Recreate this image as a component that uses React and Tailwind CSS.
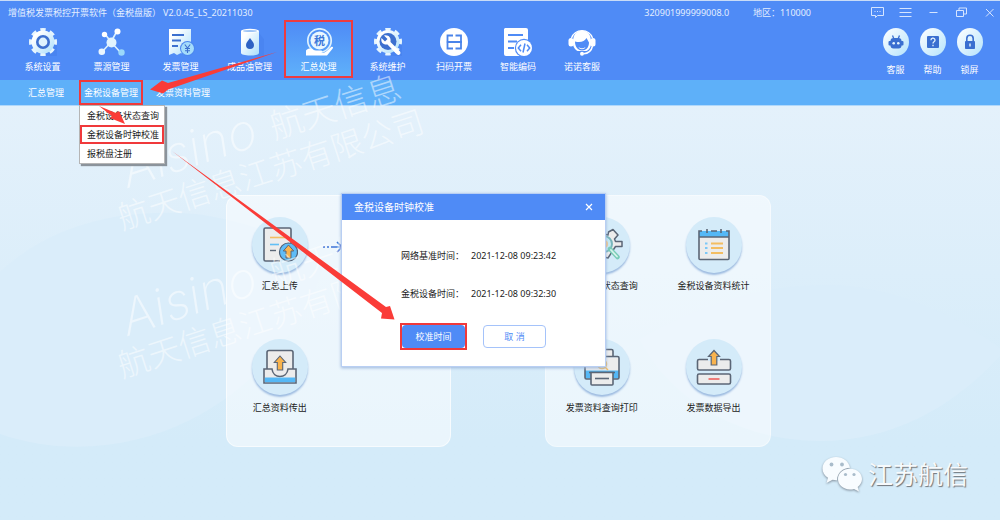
import { useState } from 'react';

const navItems = [
  { id: 'settings', label: '系统设置', icon: GearIcon },
  { id: 'source', label: '票源管理', icon: NodesIcon },
  { id: 'invoice', label: '发票管理', icon: InvoiceIcon },
  { id: 'oil', label: '成品油管理', icon: OilIcon },
  { id: 'summary', label: '汇总处理', icon: TaxIcon },
  { id: 'maintain', label: '系统维护', icon: WrenchIcon },
  { id: 'scan', label: '扫码开票', icon: ScanIcon, narrow: true },
  { id: 'code', label: '智能编码', icon: CodeIcon, narrow: true },
  { id: 'nuonuo', label: '诺诺客服', icon: HeadsetIcon, narrow: true },
];

const helpItems = [
  { label: '客服', icon: RobotIcon },
  { label: '帮助', icon: QuestionIcon },
  { label: '锁屏', icon: LockIcon },
];

const menuItems = ['金税设备状态查询', '金税设备时钟校准', '报税盘注册'];

/* ---------- Toolbar icons ---------- */

function GearIcon() {
  return (
    <svg className="w-7 h-7" viewBox="0 0 28 28">
      <path d="M22 8l6 8v12H16l-8-6z" fill="#3f78e4" opacity="0.35" />
      <circle cx="14" cy="14" r="12" fill="none" stroke="#e6f5fe" strokeWidth="4" pathLength="16" strokeDasharray="1.1 0.9" strokeDashoffset="0.55" />
      <circle cx="14" cy="14" r="11.500" fill="url(#ice)" />
      <circle cx="14" cy="14" r="7" fill="#3d70cf" />
      <circle cx="14" cy="14" r="4.400" fill="#dff3fe" />
    </svg>
  );
}

function NodesIcon() {
  return (
    <svg className="w-7 h-7" viewBox="0 0 28 28">
      <path d="M19 3L13 14M7 6l6 8M4 24l9-10M23 25L13 14" stroke="#dcf1fe" strokeWidth="1.6" />
      <circle cx="13.500" cy="14.500" r="5" fill="#e2f4fe" />
      <circle cx="19.500" cy="3.500" r="3" fill="#fff" />
      <circle cx="6.500" cy="6.500" r="2.700" fill="#fff" />
      <circle cx="3.800" cy="23.800" r="3.300" fill="#eaf6ff" />
      <circle cx="23.500" cy="24.500" r="3.200" fill="#9bd8fa" />
    </svg>
  );
}

function InvoiceIcon() {
  return (
    <svg className="w-7 h-7" viewBox="0 0 28 28">
      <path d="M2 1h22v26l-3-2-3 2-4-2-4 2-3-2-5 2z" fill="url(#ice)" />
      <path d="M5 7h12M5 12.500h9M5 18h6" stroke="#3d70cf" strokeWidth="1.800" />
      <circle cx="20.500" cy="20.500" r="7.500" fill="#4b86ee" />
      <circle cx="20.500" cy="20.500" r="6.500" fill="#a5dcfb" />
      <path d="M17.800 16.500l2.700 3.500 2.700-3.500M20.500 20v5M18 20.500h5M18 22.700h5" fill="none" stroke="#3d70cf" strokeWidth="1.100" />
    </svg>
  );
}

function OilIcon() {
  return (
    <svg className="w-7 h-7" viewBox="0 0 28 28">
      <path d="M23 5l8 10v13H15z" fill="#3f78e4" opacity="0.3" />
      <path d="M5 3v22c0 1.500 4 2.500 9 2.500s9-1 9-2.500V3z" fill="url(#ice)" />
      <ellipse cx="14" cy="2.800" rx="9" ry="2" fill="#fff" />
      <ellipse cx="14" cy="3" rx="7" ry="1.100" fill="#9cc3f5" />
      <path d="M14 10c2 3 4 4.700 4 7a4 4 0 0 1-8 0c0-2.300 2-4 4-7z" fill="#2d62c4" />
    </svg>
  );
}

function TaxIcon() {
  return (
    <svg className="w-7 h-7" viewBox="0 0 28 28">
      <circle cx="14.500" cy="12.500" r="11.700" fill="none" stroke="#dff2fe" strokeWidth="1.700" />
      <circle cx="14.500" cy="12.500" r="9" fill="#eaf7ff" />
      <text x="14.500" y="16.500" fontSize="11" fontWeight="700" textAnchor="middle" fill="#3d78da">税</text>
      <path d="M1 22.500c3-3 6-2 8 0h7c1.500 0 1.500 2 0 2.300h3c3-1 5-4.500 7.500-6 1.800-.6 1.800 1 1 2L22 27.500H1z" fill="#fff" />
    </svg>
  );
}

function WrenchIcon() {
  return (
    <svg className="w-7 h-7" viewBox="0 0 28 28">
      <path d="M22 8l6 8v12H16l-8-6z" fill="#3f78e4" opacity="0.35" />
      <circle cx="14" cy="13.500" r="12" fill="none" stroke="#e6f5fe" strokeWidth="4" pathLength="16" strokeDasharray="1.1 0.9" strokeDashoffset="0.55" />
      <circle cx="14" cy="13.500" r="11.500" fill="url(#ice)" />
      <circle cx="14" cy="13.500" r="8.500" fill="#3d70cf" />
      <path d="M10 7.500l3.500 3.500-2.500 2.500L7.500 10c-1 4 1.500 7 6 6.500L23 26.500c2 1.500 4.500-.8 3-3L16.500 14c.8-4.500-2-7.500-6.500-6.500z" fill="#fff" />
    </svg>
  );
}

function ScanIcon() {
  return (
    <svg className="w-7 h-7" viewBox="0 0 28 28">
      <circle cx="14" cy="14" r="14" fill="#fff" />
      <path d="M13 7.500H7.500v13H13M15.500 7.500H21v13h-5.500M6.500 14h15.500" fill="none" stroke="#4a84ea" strokeWidth="1.800" />
    </svg>
  );
}

function CodeIcon() {
  return (
    <svg className="w-7 h-7 overflow-visible" viewBox="0 0 28 28">
      <path d="M1 0h21a2 2 0 0 1 2 2v25a1 1 0 0 1-1 1H2a2 2 0 0 1-2-2V1z" fill="#fff" />
      <path d="M4 7h15M4 13.500h9M4 20h6" stroke="#4f8bf6" strokeWidth="1.800" />
      <circle cx="20" cy="20" r="9.200" fill="#4f8bf6" />
      <circle cx="20" cy="20" r="8" fill="#fff" />
      <path d="M17 16.800L14.300 20l2.700 3.200M23 16.800l2.700 3.200-2.700 3.200M21 15.500l-2 9" fill="none" stroke="#4f8bf6" strokeWidth="1.500" />
    </svg>
  );
}

function HeadsetIcon() {
  return (
    <svg className="w-7 h-7" viewBox="0 0 28 28">
      <path d="M3.500 10a10.800 9.500 0 0 1 21 0" fill="none" stroke="#fff" strokeWidth="1.300" />
      <path d="M5 12a9 9.500 0 0 1 18 0v5c-.5 2-2 5-4.500 6h-9c-2-1-4-3.500-4.500-6z" fill="#fff" />
      <rect x="0.500" y="10" width="5" height="8.500" rx="2.500" fill="#fff" />
      <rect x="22.500" y="10" width="5" height="8.500" rx="2.500" fill="#fff" />
      <path d="M7 13.500c5.500 1.500 9.500 0 11.500-3.500l2.500 4.500c0 5-3 8-7 8s-7-3.500-7-9z" fill="#4f8bf6" />
      <path d="M10.500 19c2 1.800 5 1.800 7 0-1 3-6 3-7 0z" fill="#fff" />
      <path d="M24.500 18c-1 4.500-4.500 7.500-9 7.800" fill="none" stroke="#fff" strokeWidth="1.500" />
      <circle cx="14" cy="25.800" r="2" fill="#fff" />
    </svg>
  );
}

function RobotIcon() {
  return (
    <svg className="w-4 h-4" viewBox="0 0 16 16" fill="#3a6fd0">
      <path d="M4.500 1.500l1.700 4M11.500 1.500l-1.700 4" stroke="#3a6fd0" strokeWidth="1.300" />
      <rect x="2.500" y="4" width="11" height="10.500" rx="3" />
      <rect x="0.500" y="7" width="15" height="4.500" rx="1" />
      <circle cx="5.700" cy="9.200" r="1.300" fill="#e5f5ff" />
      <circle cx="10.300" cy="9.200" r="1.300" fill="#e5f5ff" />
    </svg>
  );
}

function QuestionIcon() {
  return (
    <svg className="w-4 h-4" viewBox="0 0 16 16">
      <rect x="2" y="2" width="12" height="12" rx="1" fill="#3a6fd0" />
      <path d="M6 6.300a2 2 0 1 1 3 1.500c-.8.5-1 .8-1 1.700M8 10.800v1.400" fill="none" stroke="#e5f5ff" strokeWidth="1.300" />
    </svg>
  );
}

function LockIcon() {
  return (
    <svg className="w-4 h-4" viewBox="0 0 16 16">
      <path d="M4.800 8V4.500a3.200 3.200 0 0 1 6.400 0V8" fill="none" stroke="#3a6fd0" strokeWidth="1.600" />
      <rect x="3" y="7" width="10" height="8" rx="0.800" fill="#3a6fd0" />
      <path d="M8 9.500v3" stroke="#e5f5ff" strokeWidth="1.400" />
    </svg>
  );
}

/* ---------- Window buttons ---------- */

const windowButtons = [
  { label: '消息', path: 'M0.500 1.500h12v8h-6l-2 2v-2h-4zM3.500 5.500h1M6 5.500h1M8.500 5.500h1' },
  { label: '菜单', path: 'M0.500 2.500h12M0.500 6.500h12M0.500 10.500h12' },
  { label: '最小化', path: 'M2.500 6.500h8' },
  { label: '还原', path: 'M1.500 4.500h7v6h-7zM4 4.500v-2.500h7.500v6h-3' },
  { label: '关闭', path: 'M3 3l7.500 7.500M10.500 3L3 10.500' },
];

/* ---------- Function icons in the panels ---------- */

function UploadDocIcon() {
  return (
    <svg className="w-9 h-9" viewBox="0 0 36 36">
      <path d="M18 34H3.500a1.500 1.500 0 0 1-1.500-1.500v-30A1.500 1.500 0 0 1 3.500 1h24A1.500 1.500 0 0 1 29 2.500V16" fill="#ececec" stroke="#5b6676" strokeWidth="1.600" />
      <path d="M8 10.500h15" stroke="#f3bd62" strokeWidth="1.600" />
      <path d="M8 17.500h9" stroke="#62bff5" strokeWidth="1.600" />
      <path d="M8 23.500h6" stroke="#5b6676" strokeWidth="1.400" />
      <circle cx="26.500" cy="25" r="9" fill="#5ebcf7" stroke="#4f6278" strokeWidth="1.200" />
      <path d="M26.500 18l5.200 6H29v7h-5v-7h-2.700z" fill="#f8b34e" stroke="#5b6676" strokeWidth="1" />
    </svg>
  );
}

function OutboxIcon() {
  return (
    <svg className="w-9 h-9" viewBox="0 0 36 36">
      <path d="M5 20V3.500A2 2 0 0 1 7 1.500h22a2 2 0 0 1 2 2V20l-6 8H11z" fill="#ececec" stroke="#5b6676" strokeWidth="1.600" />
      <path d="M2 20h8c1 10 15 10 16 0h8v14H2z" fill="#ececec" stroke="#5b6676" strokeWidth="1.600" />
      <path d="M2.800 28.500h30.400v4.700H2.800z" fill="#55b8f6" />
      <path d="M18 7l5.700 6.500h-3v7.500h-5.400v-7.500h-3z" fill="#f8b34e" stroke="#5b6676" strokeWidth="1.100" />
    </svg>
  );
}

function GearSearchIcon() {
  return (
    <svg className="w-9 h-9 overflow-visible" viewBox="0 0 36 36">
      <path
        d="M13 7v-6h7v6l4 1 .5-3L29 2.500 34 8l-3.500 4 1 2.500H38v5h-6.500L24 31l-4-1v5h-7v-5l-4-2-5 3-4-5 4-4V14L1 9l5-4 4 3z"
        fill="#ececec"
        stroke="#5b6676"
        strokeWidth="1.500"
        strokeLinejoin="round"
      />
      <circle cx="20" cy="17" r="8" fill="#c5e9f2" stroke="#79b5bb" strokeWidth="2" />
      <circle cx="20" cy="17" r="4" fill="#f6c587" />
      <path d="M26 22l7.500 8" stroke="#79ccb8" strokeWidth="4.500" strokeLinecap="round" />
      <path d="M27 23l6 6.500" stroke="#d8f3ea" strokeWidth="1.800" strokeLinecap="round" />
    </svg>
  );
}

function CalendarIcon() {
  return (
    <svg className="w-9 h-9" viewBox="0 0 36 36">
      <path d="M3 4h30v28.500H3z" fill="#ececec" />
      <path d="M3 4h30v6H3z" fill="#55b8f6" />
      <path d="M3 10h30M6 4H3v27.500a1 1 0 0 0 1 1h28a1 1 0 0 0 1-1V4h-3M15 4h6" fill="none" stroke="#5b6676" strokeWidth="1.600" />
      <path d="M11 2v4M25 2v4" stroke="#5b6676" strokeWidth="1.600" />
      <path d="M9 16.500h2.500M9 21h2.500M9 26h2.500" stroke="#7cc8f7" strokeWidth="1.800" />
      <path d="M15 16.500h12M15 21h12M15 26h12" stroke="#f3bd62" strokeWidth="1.800" />
    </svg>
  );
}

function PrinterIcon() {
  return (
    <svg className="w-9 h-9 overflow-visible" viewBox="0 0 36 36">
      <path d="M7 8V2a1.500 1.500 0 0 1 1.500-1.500h19A1.500 1.500 0 0 1 29 2v6" fill="#ececec" stroke="#5b6676" strokeWidth="1.600" />
      <path d="M1 8.500h34v21H1z" fill="#ececec" />
      <path d="M1 21.500h34v8H1z" fill="#55b8f6" />
      <rect x="1" y="7.500" width="34" height="22.500" rx="1.500" fill="none" stroke="#5b6676" strokeWidth="1.600" />
      <circle cx="18" cy="15" r="4.500" fill="none" stroke="#f3bd62" strokeWidth="1.500" />
      <path d="M21 18l3 3" stroke="#f3bd62" strokeWidth="1.500" />
      <path d="M5 23.500h26" stroke="#5b6676" strokeWidth="1.500" />
      <path d="M7 23.500h22V35a1 1 0 0 1-1 1H8a1 1 0 0 1-1-1z" fill="#ececec" stroke="#5b6676" strokeWidth="1.600" />
      <path d="M11 29.500h14" stroke="#5b6676" strokeWidth="1.600" />
    </svg>
  );
}

function ExportIcon() {
  return (
    <svg className="w-9 h-9" viewBox="0 0 36 36">
      <rect x="1.500" y="10.500" width="33" height="10.500" rx="1.500" fill="#ececec" stroke="#5b6676" strokeWidth="1.600" />
      <rect x="1.500" y="25" width="33" height="10" rx="1.500" fill="#ececec" stroke="#5b6676" strokeWidth="1.600" />
      <path d="M12 8h12v4H12z" fill="#d5ebf9" />
      <path d="M12.500 30h11" stroke="#ee6a66" strokeWidth="1.700" />
      <path d="M18 1.500l5.500 6h-2.700V16h-5.600V7.500h-2.700z" fill="#f8b34e" stroke="#5b6676" strokeWidth="1.200" />
    </svg>
  );
}

function FunctionItem({ label, icon: Icon }) {
  return (
    <button className="flex flex-col items-center">
      <span className="w-14 h-14 rounded-full bg-[#d4ebf9] shadow-[0_2px_2px_#9dbbe0] flex items-center justify-center">
        <Icon />
      </span>
      <span className="mt-[7px] leading-3 whitespace-nowrap text-[#222]">{label}</span>
    </button>
  );
}

/* ---------- Background ---------- */

function Backdrop() {
  return (
    <svg className="absolute inset-0 w-full h-full pointer-events-none" viewBox="0 0 1000 520" preserveAspectRatio="xMidYMid slice" aria-hidden="true">
      <defs>
        <linearGradient id="ice" x1="0" y1="0" x2="1" y2="1">
          <stop offset="0.2" stopColor="#ffffff" />
          <stop offset="1" stopColor="#a9defb" />
        </linearGradient>
      </defs>
      <path d="M0 272C50 225 120 208 195 214C260 222 315 250 322 270C310 310 270 380 190 420C130 450 60 455 0 434z" fill="#daedfa" />
      <path d="M590 370C680 310 750 285 825 285C895 285 955 315 1000 348V356C950 410 890 441 820 441C740 441 670 400 640 340z" fill="#daedfa" />
    </svg>
  );
}

function Watermark() {
  return (
    <svg className="absolute inset-0 w-full h-full pointer-events-none" viewBox="0 0 1000 520" preserveAspectRatio="xMinYMin slice" aria-hidden="true">
      {[0, 148].map((y) => (
        <g key={y} fill="#fff" fillOpacity="0.5" fontSize="32" fontWeight="200">
          <g transform={`translate(128 ${188 + y}) rotate(-18)`}>
            <text className="font-[Inter]" fontSize="50" fontStyle="italic">Aisino</text>
            <text x="154" y="-1" fontSize="34">航天信息</text>
          </g>
          <text transform={`translate(122 ${230 + y}) rotate(-18)`}>航天信息江苏有限公司</text>
        </g>
      ))}
    </svg>
  );
}

/* ---------- Red guide arrows ---------- */

function GuideArrows() {
  return (
    <svg className="absolute inset-0 w-full h-full pointer-events-none z-30" viewBox="0 0 1000 520" preserveAspectRatio="xMinYMin slice" fill="#fa3c38" aria-hidden="true">
      <path d="M277 52L168 83L162 80.500L150 89.500L163 93.500L168 89.500z" />
      <path d="M99 106L116 113L119 111L125 124L110 118L112 116z" />
      <path d="M172 151L386 307L390 306L394.500 319.500L381 318.500L382 313z" />
    </svg>
  );
}

function CalibrateDialog({ onClose }) {
  return (
    <section role="dialog" aria-label="金税设备时钟校准" className="absolute left-[341px] top-[193px] w-[265px] z-20 bg-white border border-[#b9cff3] shadow-[0_1px_3px_#9ab5dc]">
      <header className="h-[26px] pl-3 pr-[11px] flex items-center bg-[#4f8bf6] text-white">
        <h2 className="text-[10px]">金税设备时钟校准</h2>
        <button onClick={onClose} aria-label="关闭" className="ml-auto">
          <svg className="w-2.5 h-2.5" viewBox="0 0 10 10" stroke="#fff" strokeWidth="1.200">
            <path d="M2 2l6 6M8 2l-6 6" />
          </svg>
        </button>
      </header>
      <dl className="pt-7 pl-[59px] grid grid-cols-[auto_1fr] gap-x-[7px] gap-y-[22px] leading-4 text-[#222]">
        <dt>网络基准时间：</dt>
        <dd>2021-12-08 09:23:42</dd>
        <dt>金税设备时间：</dt>
        <dd>2021-12-08 09:32:30</dd>
      </dl>
      <div className="mt-[21px] pb-4 pl-[58px] flex items-center gap-4">
        <span className="border-2 border-[#f0393b]">
          <button className="w-[63px] h-[23px] rounded bg-[#4f8bf6] text-white block">校准时间</button>
        </span>
        <button onClick={onClose} className="w-[63px] h-[23px] rounded border border-[#a5c3fa] text-[#4f8bf6]">取 消</button>
      </div>
    </section>
  );
}

export default function App() {
  const [active, setActive] = useState('summary');
  const [dialogOpen, setDialogOpen] = useState(true);

  return (
    <div lang="zh-CN" className="relative min-h-screen overflow-hidden bg-linear-to-b from-[#e4f1fb] from-20% to-[#d4ebf9] to-85% font-['Noto_Sans','Noto_Sans_CJK_SC',sans-serif] text-[9px]">
      <Backdrop />

      {/* Header */}
      <header className="relative bg-[#4f8bf6] border-t border-[#c9dcf7] text-white">
        <div className="h-[19px] pt-1 pl-2 pr-1 flex items-center text-[#e3eeff]">
          <h1>增值税发票税控开票软件（金税盘版）</h1>
          <span className="ml-0.5">V2.0.45_LS_20211030</span>
          <span className="ml-auto">320901999999008.0</span>
          <span className="ml-6">地区：110000</span>
          <div className="ml-[60px] flex gap-[15px]">
            {windowButtons.map((b) => (
              <button key={b.label} aria-label={b.label}>
                <svg className="w-[13px] h-[13px]" viewBox="0 0 13 13" fill="none" stroke="#d6e5ff">
                  <path d={b.path} />
                </svg>
              </button>
            ))}
          </div>
        </div>

        <div className="h-[60px] pl-2 pr-3 flex items-start">
          <nav className="flex">
            {navItems.map((item) => (
              <button
                key={item.id}
                onClick={() => setActive(item.id)}
                className={`h-[58px] border-2 pt-1.5 flex flex-col items-center ${item.narrow ? 'w-16' : 'w-[69px]'} ${
                  active === item.id ? 'border-[#ee3b40] bg-linear-to-b from-[#4f8bf6] to-[#5fb0fa]' : 'border-transparent'
                }`}
              >
                <item.icon />
                <span className="mt-[5px] leading-3 whitespace-nowrap">{item.label}</span>
              </button>
            ))}
          </nav>
          <div className="ml-auto pt-2 flex">
            {helpItems.map((item) => (
              <button key={item.label} className="w-[37px] flex flex-col items-center">
                <span className="w-[26px] h-7 rounded-[50%] bg-linear-to-br from-white to-[#b4e3fc] flex items-center justify-center">
                  <item.icon />
                </span>
                <span className="mt-2 leading-3">{item.label}</span>
              </button>
            ))}
          </div>
        </div>
      </header>

      {/* Sub menu */}
      <nav className="relative h-[26px] pl-[23px] flex items-stretch gap-[10px] bg-[#5eb0f9] border-b border-[#b0d8fb] text-white">
        <button className="px-[5px]">汇总管理</button>
        <div className="relative flex z-10">
          <button className="px-[3px] border-2 border-[#f0393b]">金税设备管理</button>
          <ul className="absolute left-0 top-full w-[86px] bg-white border border-[#b5b5b5] shadow-[2px_2px_1px_#8b939b] text-[#222]">
            {menuItems.map((item, i) => (
              <li key={item}>
                <button
                  onClick={() => i === 1 && setDialogOpen(true)}
                  className={`block w-full pl-[5px] text-left whitespace-nowrap border-2 leading-[15px] ${i === 1 ? 'border-[#f0393b]' : 'border-transparent'}`}
                >
                  {item}
                </button>
              </li>
            ))}
          </ul>
        </div>
        <button className="px-[3px]">发票资料管理</button>
      </nav>

      {/* Function panels */}
      <main className="relative pt-[89px] pr-1">
        <div className="w-[545px] max-w-full mx-auto grid grid-cols-2 gap-[94px]">
          <section className="pt-[21px] pb-8 grid grid-cols-[1fr_10px_1fr] gap-y-[47px] rounded-xl border border-white/60 bg-white/50">
            <FunctionItem label="汇总上传" icon={UploadDocIcon} />
            <div className="pt-6 flex justify-end">
              <svg className="w-5 h-3 shrink-0" viewBox="0 0 20 12" fill="none" stroke="#3f74d6" strokeWidth="1.600">
                <path d="M0 6h2M4 6h2M8 6h11M14 1l5 5-5 5" />
              </svg>
            </div>
            <div />
            <FunctionItem label="汇总资料传出" icon={OutboxIcon} />
          </section>
          <section className="pt-[21px] pb-8 grid grid-cols-2 gap-y-[47px] rounded-xl border border-white/40 bg-white/50">
            <FunctionItem label="金税设备状态查询" icon={GearSearchIcon} />
            <FunctionItem label="金税设备资料统计" icon={CalendarIcon} />
            <FunctionItem label="发票资料查询打印" icon={PrinterIcon} />
            <FunctionItem label="发票数据导出" icon={ExportIcon} />
          </section>
        </div>
      </main>

      <Watermark />

      {dialogOpen && <CalibrateDialog onClose={() => setDialogOpen(false)} />}

      <GuideArrows />

      {/* Account badge */}
      <div className="absolute right-8 bottom-7 flex items-center gap-1.5">
        <svg className="w-10 h-9 drop-shadow-[0_1px_1px_#7f8c99]" viewBox="0 0 40 36">
          <path d="M14 1C6.500 1 0.500 6 0.500 12.500c0 4 2 7 5.500 9.300L4.500 27l6-3.200c1.500.3 3 .5 4.500.4C15 17 21 11.800 28 11.800 27 5.500 21 1 14 1z" fill="#f8fcff" />
          <path d="M28 12.800c-7 0-12 4.700-12 10.300s5 10.400 12 10.400c1.400 0 2.700-.2 4-.6l5 2.600-1.300-4.500c2.700-2 4.300-4.800 4.300-7.900 0-5.600-5-10.300-12-10.300z" fill="#f8fcff" />
          <circle cx="9.500" cy="8.500" r="1.900" fill="#a9bccb" />
          <circle cx="20" cy="8.500" r="1.900" fill="#a9bccb" />
          <circle cx="23.500" cy="18.500" r="1.600" fill="#a9bccb" />
          <circle cx="32" cy="18.500" r="1.600" fill="#a9bccb" />
        </svg>
        <span className="text-[25px] leading-9 text-[#f7fafc] [text-shadow:1px_1px_1px_#6f7479]">江苏航信</span>
      </div>
    </div>
  );
}
